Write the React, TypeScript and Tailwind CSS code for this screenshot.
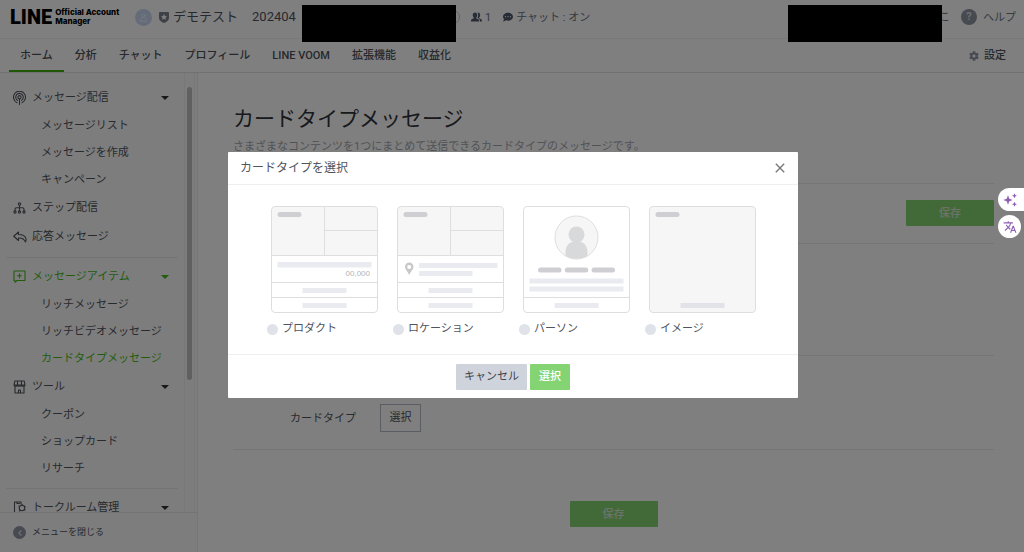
import type { ReactNode } from "react";
import { FaCog, FaCommentDots } from "react-icons/fa";
import { MdClose, MdTranslate } from "react-icons/md";

const stroke = { fill: "none", stroke: "currentColor", strokeLinecap: "round", strokeLinejoin: "round" } as const;

function BroadcastIcon() {
  return (
    <svg viewBox="0 0 26 28" className="h-[14px] w-[13px]" {...stroke} strokeWidth="2.2">
      <path d="M8 23.4a12 12 0 1 1 10 0" />
      <path d="M9 18.8a7.6 7.6 0 1 1 8 0" />
      <circle cx="13" cy="12.4" r="3.2" />
      <path d="M13 15.6V27" />
    </svg>
  );
}

function StepIcon() {
  return (
    <svg viewBox="0 0 26 24" className="h-3 w-[13px]" {...stroke} strokeWidth="2.2">
      <circle cx="13" cy="4" r="2.4" />
      <path d="M13 6.4V18M4 18v-3.500c0-2 1-3 3-3h12c2 0 3 1 3 3V18" />
      <circle cx="4" cy="20" r="2.2" />
      <circle cx="13" cy="20" r="2.2" />
      <circle cx="22" cy="20" r="2.2" />
    </svg>
  );
}

function ReplyIcon() {
  return (
    <svg viewBox="0 0 28 24" className="h-3 w-[14px] shrink-0" {...stroke} strokeWidth="2.2">
      <path d="M11 2 1.500 10.500 11 19v-5c7-.6 11 1.500 14 8 .8-2 1.500-4 1-6.500C25 10 19 7 11 7z" />
    </svg>
  );
}

function ItemIcon() {
  return (
    <svg viewBox="0 0 26 26" className="h-[13px] w-[13px]" {...stroke} strokeWidth="2.2">
      <path d="M2 2h22v19H8l-4 3.500V21H2z" />
      <path d="M13 7.500v8M9 11.500h8" />
    </svg>
  );
}

function ShopIcon() {
  return (
    <svg viewBox="0 0 26 28" className="h-[14px] w-[13px]" {...stroke} strokeWidth="2.2">
      <path d="M3.500 2h19L24 10H2zM9 2v8M17 2v8M2 10c0 3.500 7 3.500 7 0 0 3.500 8 3.500 8 0 0 3.500 7 3.500 7 0M4 13v13h18V13M11 26v-6h4v6" />
    </svg>
  );
}

function TalkRoomIcon() {
  return (
    <svg viewBox="0 0 26 28" className="h-[14px] w-[13px]" {...stroke} strokeWidth="2.2">
      <path d="M8 26H3V2h13v4M8 2v3h5" />
      <circle cx="18" cy="14" r="5.500" />
      <path d="m18 7 1 1.500M24 11l-1 1M24 18l-1.500-1M13 20l1-1.500M12 10l1 1" />
    </svg>
  );
}

function FriendsIcon() {
  return (
    <svg viewBox="0 0 22 20" className="h-[10px] w-[11px] text-[#50586c]" fill="currentColor">
      <path d="M8 1c2.800 0 4.500 2 4.500 5 0 2-.8 3.800-2 4.800v1.700l4 1.800c1 .5 1.500 1.200 1.500 2.700v2H0v-2c0-1.500.5-2.200 1.500-2.700l4-1.800v-1.700C4.300 9.800 3.500 8 3.500 6c0-3 1.700-5 4.500-5z" />
      <path d="M13 1.100c3-.6 5.300 1.500 5.300 4.900 0 2-.8 3.800-2 4.800v1.700l4 1.800c1 .5 1.500 1.200 1.500 2.700v2h-4.200v-2.500c0-1.800-.8-3-2.300-3.700l-2.500-1.200c1-1.300 1.600-3 1.600-5 0-2.200-.5-3.800-1.400-5.500z" />
    </svg>
  );
}

function Logo() {
  return (
    <a href="#home" aria-label="LINE Official Account Manager" className="flex items-center gap-[3px] text-black">
      <span className="font-[Roboto] text-[20px] leading-[18px] font-black">LINE</span>
      <span className="font-[Inter] text-[8px] leading-[9px] font-extrabold whitespace-nowrap">
        Official Account
        <br />
        Manager
      </span>
    </a>
  );
}

function Header() {
  return (
    <header className="flex h-[39px] items-center border-b border-[#f2f2f2] pr-2 pb-[4px] pl-[10px] whitespace-nowrap">
      <div className="w-[125px]">
        <Logo />
      </div>
      <span className="flex h-[17px] w-[17px] items-center justify-center rounded-full bg-[#c9d6f2] text-[#eef3ff]">
        <svg viewBox="0 0 16 16" className="h-[9px] w-[9px]" {...stroke} strokeWidth="1.600">
          <circle cx="8" cy="4.500" r="3" />
          <path d="M2.500 14c0-4 2-6 5.500-6s5.500 2 5.500 6z" />
        </svg>
      </span>
      <svg viewBox="0 0 20 22" className="ml-[7px] h-[11px] w-[10px] text-[#7d8190]">
        <path fill="currentColor" d="M2 0h16a2 2 0 0 1 2 2v10c0 5-5 8-10 10C5 20 0 17 0 12V2a2 2 0 0 1 2-2z" />
        <path fill="#fff" d="m10 4 1.900 3.800 4.100.6-3 2.900.7 4.200-3.700-2-3.700 2 .7-4.200-3-2.900 4.100-.6z" />
      </svg>
      <h2 className="ml-1 flex w-[267px] gap-[14px] text-[13px] text-[#4f535c]">
        <span>デモテスト</span>
        <span>202404</span>
      </h2>
      <div className="-ml-5 h-[14px] w-10 rounded-full border border-[#c4c6cc]" />
      <div className="ml-[11px] flex items-center gap-[3px] text-[11px] text-[#6b7283]">
        <FriendsIcon />
        <span className="pt-[2px]">1</span>
        <FaCommentDots className="ml-[9px] h-[10px] w-[10px] text-[#50586c]" />
        <span className="pt-[2px]">チャット : オン</span>
      </div>
      <div className="ml-auto flex items-center text-[11px] text-[#6b7283]">
        <span className="pt-[2px]">こ</span>
        <a href="#help" className="ml-[11px] flex items-center gap-[6px]">
          <span className="flex h-4 w-4 items-center justify-center rounded-full bg-[#8e95a3] pt-[1px] text-[11px] font-bold text-[#dddddd]">
            ?
          </span>
          <span className="pt-[2px]">ヘルプ</span>
        </a>
      </div>
    </header>
  );
}

const tabs = ["ホーム", "分析", "チャット", "プロフィール", "LINE VOOM", "拡張機能", "収益化"];

function TabBar() {
  return (
    <nav className="flex h-[34px] items-stretch border-b border-[#e2e2e4] pr-[18px] pl-[9px] text-[11px] font-medium whitespace-nowrap text-[#4d5159]">
      {tabs.map((tab, i) => (
        <a
          key={tab}
          href="#tab"
          className={
            i === 0
              ? "flex items-center border-b-2 border-[#3eaf0e] px-[11px] pt-1"
              : "flex items-center border-b-2 border-transparent px-[11px] pt-1"
          }
        >
          {tab}
        </a>
      ))}
      <a href="#settings" className="ml-auto flex items-center gap-[5px]">
        <FaCog className="h-[10px] w-[10px] text-[#8e95a3]" />
        <span className="pt-[2px]">設定</span>
      </a>
    </nav>
  );
}

function MenuHead({ icon, label, caret, active }: { icon: ReactNode; label: string; caret?: boolean; active?: boolean }) {
  return (
    <li>
      <a
        href="#menu"
        className={
          active
            ? "flex h-[29px] items-center gap-[6px] pr-[15px] pl-[13px] text-[#45bb18]"
            : "flex h-[29px] items-center gap-[6px] pr-[15px] pl-[13px]"
        }
      >
        <span className="flex w-[13px] shrink-0 justify-center">{icon}</span>
        <span className="pt-[2px]">{label}</span>
        {caret && (
          <svg viewBox="0 0 8 4" className={active ? "ml-auto h-1 w-2" : "ml-auto h-1 w-2 text-[#303338]"}>
            <path fill="currentColor" d="M0 0h8L4 4z" />
          </svg>
        )}
      </a>
    </li>
  );
}

function MenuItem({ label, active }: { label: string; active?: boolean }) {
  return (
    <li>
      <a
        href="#menu"
        className={
          active
            ? "flex h-[27px] items-center pt-[2px] pl-[41px] text-[#45bb18]"
            : "flex h-[27px] items-center pt-[2px] pl-[41px]"
        }
      >
        {label}
      </a>
    </li>
  );
}

function Sidebar() {
  return (
    <aside className="flex w-[198px] shrink-0 flex-col border-r border-[#ececee] bg-[#fbfbfb] text-[11px] whitespace-nowrap text-[#50545d]">
      <div className="flex min-h-0 flex-1 overflow-hidden border-b border-[#e6e6e8]">
        <div className="min-w-0 flex-1 pt-[10px]">
          <ul>
            <MenuHead icon={<BroadcastIcon />} label="メッセージ配信" caret />
            <MenuItem label="メッセージリスト" />
            <MenuItem label="メッセージを作成" />
            <MenuItem label="キャンペーン" />
            <MenuHead icon={<StepIcon />} label="ステップ配信" />
            <MenuHead icon={<ReplyIcon />} label="応答メッセージ" />
          </ul>
          <hr className="mx-[6px] mt-[6px] mb-1 border-[#e8e8ea]" />
          <ul>
            <MenuHead icon={<ItemIcon />} label="メッセージアイテム" caret active />
            <MenuItem label="リッチメッセージ" />
            <MenuItem label="リッチビデオメッセージ" />
            <MenuItem label="カードタイプメッセージ" active />
            <MenuHead icon={<ShopIcon />} label="ツール" caret />
            <MenuItem label="クーポン" />
            <MenuItem label="ショップカード" />
            <MenuItem label="リサーチ" />
          </ul>
          <hr className="mx-[6px] mt-[6px] mb-1 border-[#e8e8ea]" />
          <ul>
            <MenuHead icon={<TalkRoomIcon />} label="トークルーム管理" caret />
          </ul>
        </div>
        <div className="mr-[2px] w-[11px] border-x border-[#f1f1f1] px-[2px] pt-[14px]">
          <div className="h-[69%] w-[5px] rounded-full bg-[#c1c1c1]" />
        </div>
      </div>
      <button type="button" className="flex h-[39px] items-center gap-[6px] pl-[13px] text-[9px]">
        <span className="flex h-[13px] w-[13px] items-center justify-center rounded-full bg-[#8e95a3] text-[#dddddd]">
          <svg viewBox="0 0 8 8" className="h-[6px] w-[6px]" {...stroke} strokeWidth="1.500">
            <path d="M5.500 1 2.500 4l3 3" />
          </svg>
        </span>
        <span className="pt-[1px]">メニューを閉じる</span>
      </button>
    </aside>
  );
}

function SaveButton() {
  return (
    <button
      type="button"
      disabled
      className="h-[26px] w-[88px] rounded-[1px] bg-[#84d473] pt-[2px] font-medium text-[#d9e6d5]"
    >
      保存
    </button>
  );
}

function Main() {
  return (
    <main className="min-w-0 flex-1 pt-[30px] pr-[30px] pl-[35px] text-[11px] text-[#50545d]">
      <h1 className="text-[21px] leading-8 text-[#303338]">カードタイプメッセージ</h1>
      <p className="mt-1 leading-4 whitespace-nowrap text-[#a3a6ae]">
        さまざまなコンテンツを1つにまとめて送信できるカードタイプのメッセージです。
      </p>
      <div className="mt-7 flex justify-end border-t border-[#eaeaec] pt-4 pb-[17px]">
        <SaveButton />
      </div>
      <div className="h-[112px] border-t border-[#eaeaec]" />
      <div className="flex items-center border-y border-[#eaeaec] pt-12 pb-[17px] pl-[57px]">
        <span className="w-[90px] pt-[2px]">カードタイプ</span>
        <button type="button" className="h-7 w-[41px] border border-[#b5bac4] pt-[1px]">
          選択
        </button>
      </div>
      <div className="flex justify-center pt-[51px]">
        <SaveButton />
      </div>
    </main>
  );
}

const line = "#dedede";
const bar = "#eaebf0";
const pill = "#cfcfd3";
const panel = "#f6f6f6";

function Frame({ fill, children }: { fill: string; children: ReactNode }) {
  return (
    <svg viewBox="0 0 107 107" className="block h-[107px] w-[107px]" aria-hidden="true">
      <rect x=".5" y=".5" width="106" height="106" rx="3.500" fill={fill} />
      {children}
      <rect x=".5" y=".5" width="106" height="106" rx="3.500" fill="none" stroke={line} />
    </svg>
  );
}

function PhotoGrid() {
  return (
    <>
      <path d="M.5 4A3.500 3.500 0 0 1 4 .5h99a3.500 3.500 0 0 1 3.500 3.500v45.500H.5z" fill={panel} />
      <path d="M53.500 1v48.500M53.500 24.500h53M.5 49.500h106M.5 76.500h106M.5 91.500h106" stroke={line} fill="none" />
      <rect x="6.500" y="6" width="24" height="5" rx="2.500" fill={pill} />
      <path d="M31.500 82h44v5h-44zM31.500 97h44v5h-44z" fill={bar} />
    </>
  );
}

function ProductArt() {
  return (
    <Frame fill="#fff">
      <PhotoGrid />
      <path d="M6.500 56h94v5.500h-94z" fill={bar} />
      <text x="99" y="70" textAnchor="end" fill="#b4b4b4" className="font-['Liberation_Sans'] text-[8px]">
        00,000
      </text>
    </Frame>
  );
}

function LocationArt() {
  return (
    <Frame fill="#fff">
      <PhotoGrid />
      <path d="M22 57h78.500v5H22zM22 65h53.500v5H22z" fill={bar} />
      <path
        fillRule="evenodd"
        fill="#c8c8ca"
        d="M12.200 56.500c2.400 0 4.300 1.900 4.300 4.300 0 2.500-2.300 4.200-4.300 8.200-2-4-4.200-5.700-4.200-8.200 0-2.400 1.900-4.300 4.200-4.300zm0 2.400a2 2 0 1 0 0 4 2 2 0 0 0 0-4z"
      />
    </Frame>
  );
}

function PersonArt() {
  return (
    <Frame fill="#fff">
      <circle cx="53.500" cy="31.500" r="21.500" fill={panel} />
      <circle cx="53.500" cy="28.500" r="8" fill="#d8d9db" />
      <path d="M42.500 50V46c0-6.500 4.500-11 11-11s11 4.500 11 11v4c-6 4-16 4-22 0z" fill="#d8d9db" />
      <circle cx="53.500" cy="31.500" r="21.500" fill="none" stroke={line} />
      <rect x="15" y="61.500" width="23.500" height="5" rx="2.500" fill={pill} />
      <rect x="41.800" y="61.500" width="23.500" height="5" rx="2.500" fill={pill} />
      <rect x="68.500" y="61.500" width="23.500" height="5" rx="2.500" fill={pill} />
      <path d="M6.500 72.500h94v5h-94zM6.500 80.500h94v5h-94zM31.500 97h44v5h-44z" fill={bar} />
      <path d="M.5 91.500h106" stroke={line} />
    </Frame>
  );
}

function ImageArt() {
  return (
    <Frame fill={panel}>
      <rect x="6.500" y="6" width="24" height="5" rx="2.500" fill={pill} />
      <path d="M31.500 97h44v5h-44z" fill="#e2e3e8" />
    </Frame>
  );
}

const cardTypes = [
  { id: "product", label: "プロダクト", art: <ProductArt /> },
  { id: "location", label: "ロケーション", art: <LocationArt /> },
  { id: "person", label: "パーソン", art: <PersonArt /> },
  { id: "image", label: "イメージ", art: <ImageArt /> },
];

function CardTypeDialog() {
  return (
    <div className="fixed inset-0 z-10 flex items-center justify-center bg-black/50 pb-[2px] pl-[2px]">
      <div
        role="dialog"
        aria-modal="true"
        aria-labelledby="dialog-title"
        className="w-[570px] rounded-[1px] bg-white text-[11px] text-[#50545d]"
      >
        <div className="flex h-[33px] items-center justify-between border-b border-[#efefef] pr-[10px] pl-3">
          <h2 id="dialog-title" className="text-[12px]">
            カードタイプを選択
          </h2>
          <button type="button" aria-label="閉じる" className="text-[#777777]">
            <MdClose className="h-4 w-4" />
          </button>
        </div>
        <div className="flex gap-[15px] pt-[21px] pb-[17px] pl-[39px]">
          {cardTypes.map((type) => (
            <label key={type.id} htmlFor={type.id} className="w-[111px]">
              <span className="block pl-1">{type.art}</span>
              <span className="mt-2 flex h-4 items-center gap-1 whitespace-nowrap">
                <input
                  id={type.id}
                  type="radio"
                  name="card-type"
                  className="h-[11px] w-[11px] shrink-0 appearance-none rounded-full bg-[#dfe2e8]"
                />
                <span className="pt-[1px]">{type.label}</span>
              </span>
            </label>
          ))}
        </div>
        <div className="flex h-11 items-center justify-center gap-[3px] border-t border-[#efefef]">
          <button type="button" className="h-[26px] w-[71px] rounded-[1px] bg-[#cfd3dc] pt-[2px] text-[#3f434b]">
            キャンセル
          </button>
          <button type="button" className="h-[26px] w-10 rounded-[1px] bg-[#84d473] pt-[2px] font-medium text-white">
            選択
          </button>
        </div>
      </div>
    </div>
  );
}

function FloatingTools() {
  return (
    <div className="fixed top-[188px] right-0 z-20 flex w-[26px] flex-col gap-1 text-[#8e5fb5]">
      <button type="button" aria-label="AI" className="flex h-[23px] items-center rounded-l-full bg-white pl-[5px]">
        <svg viewBox="0 0 28 28" className="h-[14px] w-[14px]" fill="currentColor">
          <path d="M10 4.500 12.600 11.400 19.500 14l-6.900 2.600L10 23.500l-2.600-6.900L.5 14l6.900-2.600z" />
          <path d="m23 .5 1.500 3.500L28 5.500 24.500 7 23 10.500 21.500 7 18 5.500 21.500 4zM23 17.500l1.500 3.500 3.500 1.500-3.500 1.500-1.500 3.500-1.500-3.500-3.500-1.500 3.500-1.500z" />
        </svg>
      </button>
      <button type="button" aria-label="翻訳" className="flex h-[23px] w-[23px] items-center justify-center rounded-full bg-white">
        <MdTranslate className="h-[14px] w-[14px]" />
      </button>
    </div>
  );
}

export default function App() {
  return (
    <div className="flex h-screen flex-col overflow-hidden bg-white font-[Roboto,'Noto_Sans_CJK_JP',sans-serif]">
      <Header />
      <TabBar />
      <div className="flex min-h-0 flex-1">
        <Sidebar />
        <Main />
      </div>
      <CardTypeDialog />
      <div className="absolute top-[5px] left-[302px] z-20 h-[37px] w-[154px] bg-black" />
      <div className="absolute top-[5px] right-[82px] z-20 h-[37px] w-[154px] bg-black" />
      <FloatingTools />
    </div>
  );
}
